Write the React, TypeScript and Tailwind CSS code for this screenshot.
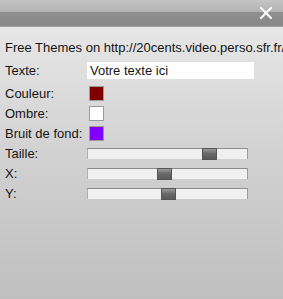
import { X } from "lucide-react";

function Row({ label, children }: { label: string; children: React.ReactNode }) {
  return (
    <div className="flex h-[20px] items-center">
      <div className="w-[82px] shrink-0">{label}</div>
      {children}
    </div>
  );
}

function Swatch({ color }: { color: string }) {
  return <div className="ml-[2px] h-[15px] w-[15px] border border-[#9a9a9a]" style={{ background: color }} />;
}

function Slider({ value }: { value: number }) {
  // thumb travels across 146px of the 161px track
  const left = Math.round((value / 100) * 146);
  return (
    <div className="relative h-[11px] w-[161px] border-t border-l border-r border-t-[#8c8c8c] border-l-[#b0b0b0] border-r-[#9c9c9c] bg-[#f0f0f0]">
      <div
        className="absolute top-[-1px] h-[12px] w-[15px] border border-[#555] bg-[linear-gradient(#9a9a9a,#6a6a6a_45%,#5a5a5a)]"
        style={{ left }}
      />
    </div>
  );
}

export default function App() {
  return (
    <div className="h-[299px] w-[283px] overflow-hidden bg-[linear-gradient(#ebebeb,#d2d2d2_50%,#bfbfbf)] font-['Liberation_Sans',Arial,sans-serif] text-[13px] leading-[15px] text-[#151515]">
      <div className="flex h-[27px] items-center justify-end bg-[linear-gradient(#c4c4c4_0,#b2b2b2_12px,#909090_12px,#878787_26px,#a0a0a0_26px)] pr-[7px]">
        <X className="-mt-[2px] h-[20px] w-[20px] text-white" strokeWidth={2.4} />
      </div>
      <div className="flex flex-col pl-[5px] pt-[10px]">
        <div className="flex h-[20px] items-center whitespace-nowrap">Free Themes on http://20cents.video.perso.sfr.fr/</div>
        <div className="mt-[3px]">
          <Row label="Texte:">
            <div className="flex h-[17px] w-[167px] items-center bg-white pl-[3px]">Votre texte ici</div>
          </Row>
        </div>
        <div className="mt-[3px]">
          <Row label="Couleur:">
            <Swatch color="#7f0000" />
          </Row>
          <Row label="Ombre:">
            <Swatch color="#ffffff" />
          </Row>
          <Row label="Bruit de fond:">
            <Swatch color="#7f00ff" />
          </Row>
          <Row label="Taille:">
            <Slider value={78} />
          </Row>
          <Row label="X:">
            <Slider value={47} />
          </Row>
          <Row label="Y:">
            <Slider value={50} />
          </Row>
        </div>
      </div>
    </div>
  );
}
